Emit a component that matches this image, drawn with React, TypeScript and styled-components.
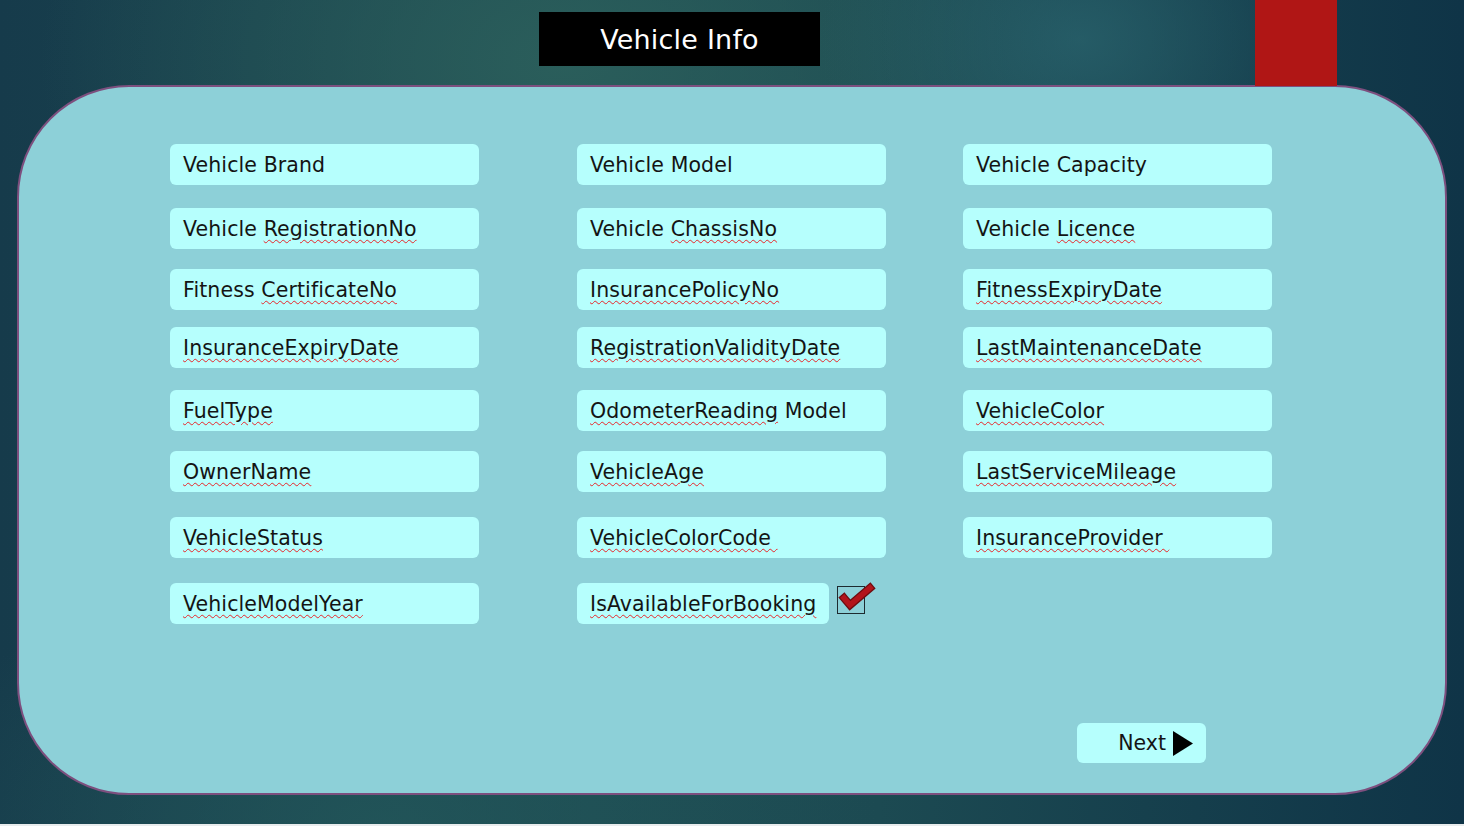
import React from 'react';
import styled, { createGlobalStyle } from 'styled-components';

const GlobalStyle = createGlobalStyle`
  html, body {
    margin: 0;
    padding: 0;
    width: 1464px;
    height: 826px;
    overflow: hidden;
  }
  body {
    font-family: 'DejaVu Sans', 'Liberation Sans', sans-serif;
  }
`;

interface IField {
  plain?: string;
  marked?: string;
  after?: string;
}

interface IRow {
  top: number;
  fields: IField[];
}

const rows: IRow[] = [
  {
    top: 57,
    fields: [
      { plain: 'Vehicle Brand' },
      { plain: 'Vehicle Model' },
      { plain: 'Vehicle Capacity' },
    ],
  },
  {
    top: 23,
    fields: [
      { plain: 'Vehicle ', marked: 'RegistrationNo' },
      { plain: 'Vehicle ', marked: 'ChassisNo' },
      { plain: 'Vehicle ', marked: 'Licence' },
    ],
  },
  {
    top: 20,
    fields: [
      { plain: 'Fitness ', marked: 'CertificateNo' },
      { marked: 'InsurancePolicyNo' },
      { marked: 'FitnessExpiryDate' },
    ],
  },
  {
    top: 17,
    fields: [
      { marked: 'InsuranceExpiryDate' },
      { marked: 'RegistrationValidityDate' },
      { marked: 'LastMaintenanceDate' },
    ],
  },
  {
    top: 22,
    fields: [
      { marked: 'FuelType' },
      { marked: 'OdometerReading', after: ' Model' },
      { marked: 'VehicleColor' },
    ],
  },
  {
    top: 20,
    fields: [
      { marked: 'OwnerName' },
      { marked: 'VehicleAge' },
      { marked: 'LastServiceMileage' },
    ],
  },
  {
    top: 25,
    fields: [
      { marked: 'VehicleStatus' },
      { marked: 'VehicleColorCode ' },
      { marked: 'InsuranceProvider ' },
    ],
  },
];

const FieldText = ({ field }: { field: IField }) => (
  <>
    {field.plain}
    {field.marked && <Squiggle>{field.marked}</Squiggle>}
    {field.after}
  </>
);

export default function App() {
  return (
    <Page>
      <GlobalStyle />
      <TopBar>
        <Title>Vehicle Info</Title>
        <RedTab />
      </TopBar>
      <Panel>
        {rows.map((row, i) => (
          <FieldRow key={i} top={row.top}>
            {row.fields.map((f, j) => (
              <Field key={j}>
                <FieldText field={f} />
              </Field>
            ))}
          </FieldRow>
        ))}
        <FieldRow top={25}>
          <Field>
            <Squiggle>VehicleModelYear</Squiggle>
          </Field>
          <BookingCell>
            <Field short>
              <Squiggle>IsAvailableForBooking</Squiggle>
            </Field>
            <CheckBox>
              <svg width='40' height='32' viewBox='0 0 40 32'>
                <path
                  d='M7 16 L13 23 L33 6'
                  fill='none'
                  stroke='#6e0c10'
                  strokeWidth='8'
                  strokeLinecap='square'
                  strokeLinejoin='miter'
                />
                <path
                  d='M7 16 L13 23 L33 6'
                  fill='none'
                  stroke='#b3141b'
                  strokeWidth='5.5'
                  strokeLinecap='square'
                  strokeLinejoin='miter'
                />
              </svg>
            </CheckBox>
          </BookingCell>
        </FieldRow>
        <Footer>
          <NextButton>
            Next
            <svg width='20' height='25' viewBox='0 0 20 25'>
              <path d='M0 0 L20 12.5 L0 25 Z' fill='#000' />
            </svg>
          </NextButton>
        </Footer>
      </Panel>
    </Page>
  );
}

const Page = styled.div`
  width: 1464px;
  height: 826px;
  box-sizing: border-box;
  border-bottom: 2px solid #e8eced;
  background:
    radial-gradient(ellipse 260px 200px at 1080px 40px, rgba(42, 100, 110, 0.75), rgba(42, 100, 110, 0) 100%),
    radial-gradient(ellipse 520px 360px at 560px 60px, rgba(44, 96, 92, 0.9), rgba(44, 96, 92, 0) 100%),
    radial-gradient(ellipse 500px 260px at 380px 826px, rgba(36, 90, 92, 0.7), rgba(36, 90, 92, 0) 100%),
    linear-gradient(90deg, #163b4b 0%, #1d4b52 40%, #1c4a52 60%, #0f3447 100%);
`;

const TopBar = styled.div`
  height: 86px;
  display: grid;
  grid-template-columns: 539px 281px 435px 82px 1fr;
`;

const Title = styled.div`
  grid-column: 2;
  margin-top: 12px;
  height: 54px;
  background: #000;
  color: #fff;
  font-size: 27px;
  letter-spacing: 0.2px;
  display: flex;
  align-items: center;
  justify-content: center;
`;

const RedTab = styled.div`
  grid-column: 4;
  background: #b01615;
`;

const Panel = styled.div`
  margin: -1px 17px 0 17px;
  height: 710px;
  box-sizing: border-box;
  background: #8dd0d8;
  border: 2px solid #7d4f7e;
  border-radius: 112px;
  padding: 0 0 0 151px;
  display: flex;
  flex-direction: column;
`;

const FieldRow = styled.div<{ top: number }>`
  margin-top: ${(p) => p.top}px;
  display: grid;
  grid-template-columns: 407px 386px 309px;
`;

const Field = styled.div<{ short?: boolean }>`
  width: ${(p) => (p.short ? '252px' : '309px')};
  flex-shrink: 0;
  height: 41px;
  box-sizing: border-box;
  background: #b6fffd;
  border-radius: 6px;
  padding: 1px 0 0 13px;
  display: flex;
  align-items: center;
  white-space: pre;
  font-size: 20.5px;
  letter-spacing: 0.1px;
  color: #141414;
`;

const Squiggle = styled.span`
  text-decoration: underline wavy #e8262a;
  text-decoration-thickness: 1px;
  text-underline-offset: 3px;
`;

const BookingCell = styled.div`
  display: flex;
  align-items: center;
  gap: 8px;
`;

const CheckBox = styled.div`
  position: relative;
  flex-shrink: 0;
  width: 28px;
  height: 28px;
  box-sizing: border-box;
  border: 1.5px solid #1d2a30;
  margin-top: -8px;

  svg {
    position: absolute;
    left: -1px;
    top: -5px;
  }
`;

const Footer = styled.div`
  margin-top: 99px;
  padding-left: 907px;
`;

const NextButton = styled.div`
  width: 129px;
  height: 40px;
  box-sizing: border-box;
  background: #b6fffd;
  border-radius: 6px;
  display: flex;
  align-items: center;
  justify-content: flex-end;
  gap: 7px;
  padding: 0 13px 0 0;
  font-size: 20.5px;
  color: #141414;
`;
